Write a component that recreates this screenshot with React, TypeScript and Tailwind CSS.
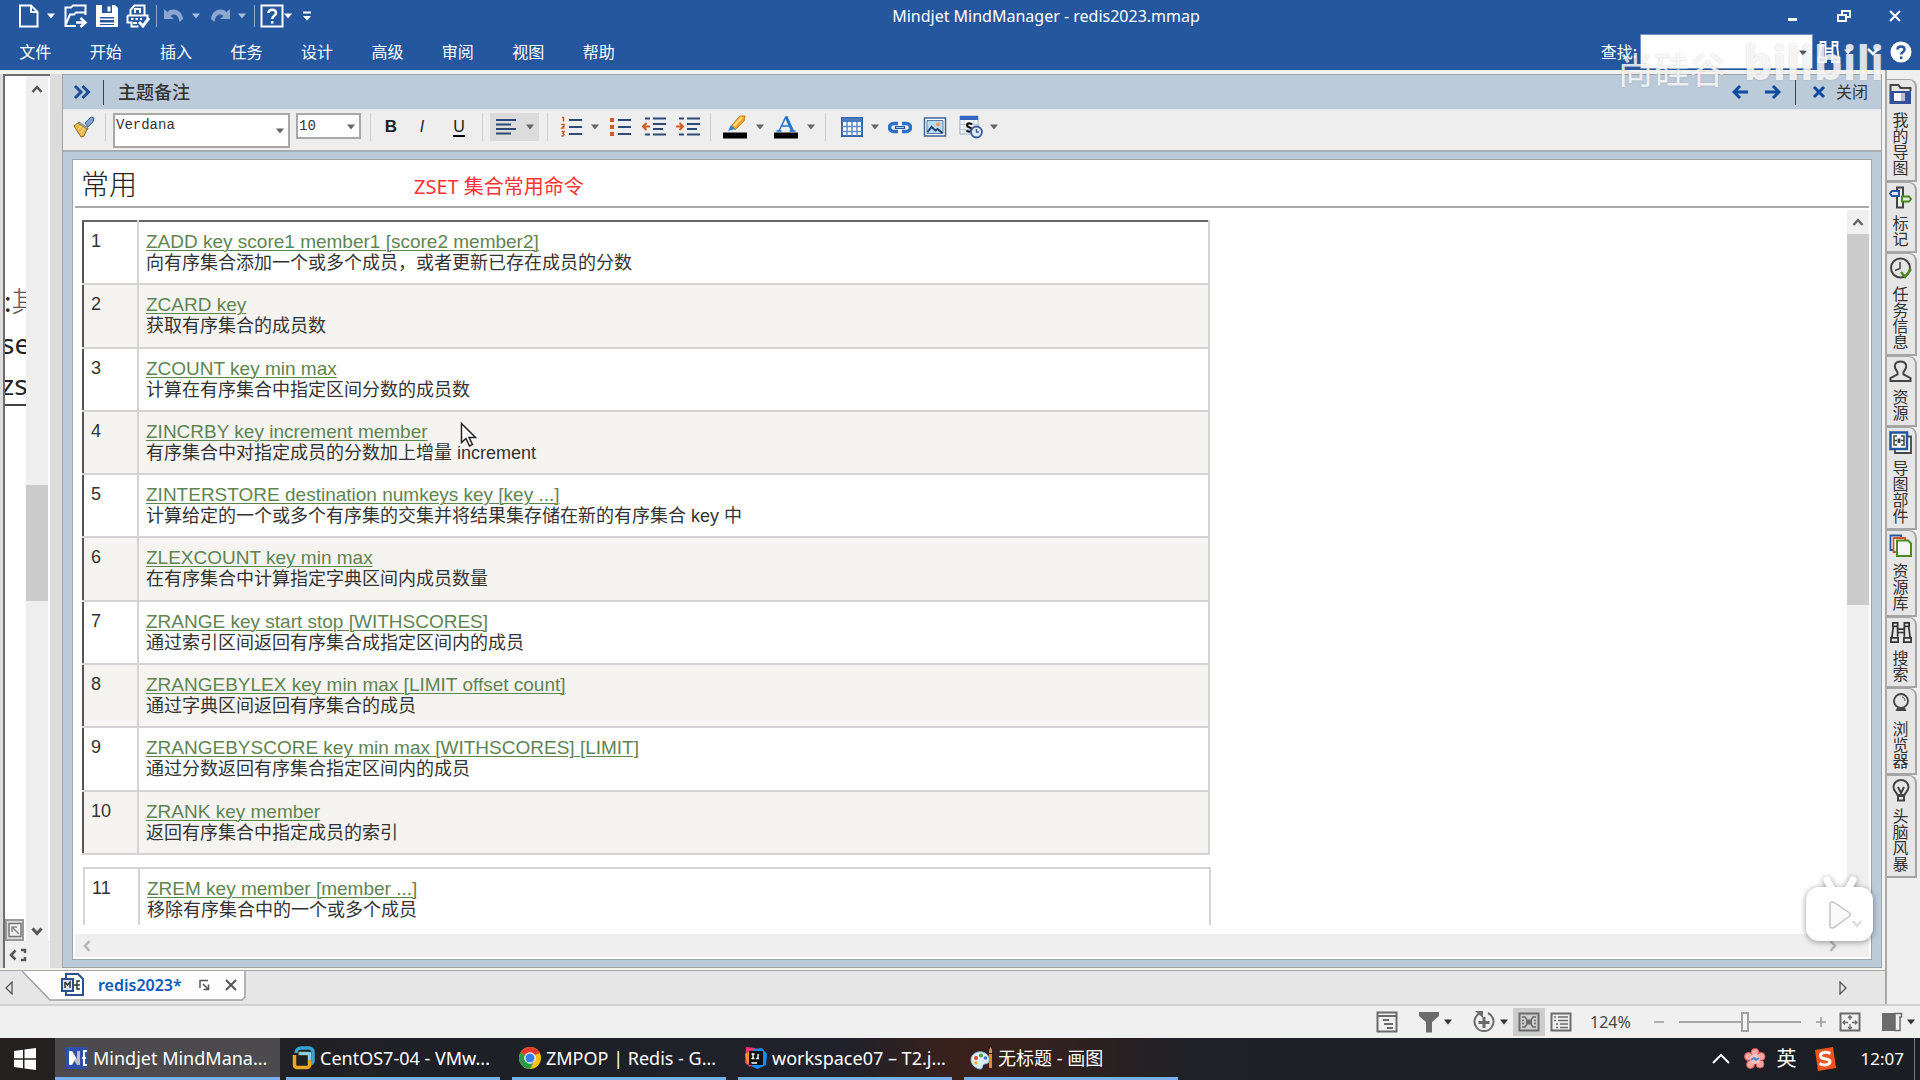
import type { ReactNode } from 'react';

const commands = [
  { id: 1, cmd: 'ZADD key score1 member1 [score2 member2]', desc: '向有序集合添加一个或多个成员，或者更新已存在成员的分数' },
  { id: 2, cmd: 'ZCARD key', desc: '获取有序集合的成员数' },
  { id: 3, cmd: 'ZCOUNT key min max', desc: '计算在有序集合中指定区间分数的成员数' },
  { id: 4, cmd: 'ZINCRBY key increment member', desc: '有序集合中对指定成员的分数加上增量 increment' },
  { id: 5, cmd: 'ZINTERSTORE destination numkeys key [key ...]', desc: '计算给定的一个或多个有序集的交集并将结果集存储在新的有序集合 key 中' },
  { id: 6, cmd: 'ZLEXCOUNT key min max', desc: '在有序集合中计算指定字典区间内成员数量' },
  { id: 7, cmd: 'ZRANGE key start stop [WITHSCORES]', desc: '通过索引区间返回有序集合成指定区间内的成员' },
  { id: 8, cmd: 'ZRANGEBYLEX key min max [LIMIT offset count]', desc: '通过字典区间返回有序集合的成员' },
  { id: 9, cmd: 'ZRANGEBYSCORE key min max [WITHSCORES] [LIMIT]', desc: '通过分数返回有序集合指定区间内的成员' },
  { id: 10, cmd: 'ZRANK key member', desc: '返回有序集合中指定成员的索引' },
];

const moreCommands = [{ id: 11, cmd: 'ZREM key member [member ...]', desc: '移除有序集合中的一个或多个成员' }];

const menus = ['文件', '开始', '插入', '任务', '设计', '高级', '审阅', '视图', '帮助'];

function Svg({ w = 24, h = 24, className = '', children }: { w?: number; h?: number; className?: string; children: ReactNode }) {
  return (
    <svg width={w} height={h} viewBox={`0 0 ${w} ${h}`} fill="none" className={`shrink-0 ${className}`} aria-hidden="true">
      {children}
    </svg>
  );
}

function Caret({ className = '' }: { className?: string }) {
  return (
    <Svg w={8} h={6} className={className}>
      <path d="M0 0.5h8L4 5.5z" fill="currentColor" />
    </Svg>
  );
}

function IconButton({ label, className = '', children }: { label: string; className?: string; children: ReactNode }) {
  return (
    <button type="button" aria-label={label} className={`flex shrink-0 items-center justify-center ${className}`}>
      {children}
    </button>
  );
}

/* ---------- Title bar and menu ---------- */

function QuickAccess() {
  return (
    <div className="flex w-[320px] items-center pl-[18px]">
      <IconButton label="新建">
        <Svg w={22} h={24}>
          <path d="M2 1.500h11l6.500 6.500v14.500H2z M13 1.500v6.500h6.500" stroke="#fff" strokeWidth="2" />
        </Svg>
      </IconButton>
      <IconButton label="新建选项" className="ml-[7px]"><Caret /></IconButton>
      <IconButton label="打开" className="ml-[9px]">
        <Svg>
          <path d="M12 22H1.500V3.500H7l2-2h12.500V11M1.500 21 6 10.500h4l2-2h9" stroke="#fff" strokeWidth="2" />
          <path d="M12 18.500h9m-4.500-4.500 5 4.500-5 4.500" stroke="#fff" strokeWidth="2.500" />
        </Svg>
      </IconButton>
      <IconButton label="保存" className="ml-[7px]">
        <Svg>
          <path d="M1 1h19l3 3v19H1z" fill="#fff" />
          <path d="M7 1h10v8H7zM5 13h14v8H5z" fill="#2456a0" />
          <path d="M12.500 2.500h3v5h-3zM5 14.500h14v1.500H5zM5 18.500h14v1.500H5z" fill="#fff" />
        </Svg>
      </IconButton>
      <IconButton label="打印" className="ml-[7px]">
        <Svg>
          <path d="M4.500 12V6l4-4.500h10V12M9 9V5h5v4" stroke="#fff" strokeWidth="2" />
          <path d="M1.500 11.500h20V17M1.500 11.500v7h4v4h7" stroke="#fff" strokeWidth="2" />
          <path d="M5 15h2.500M9.500 15H12M14 15h2M7 19h4" stroke="#fff" strokeWidth="2" />
          <path d="m13 18 4 4 6-8" stroke="#fff" strokeWidth="3" />
        </Svg>
      </IconButton>
      <span className="ml-1.5 h-[22px] w-px bg-[#8ba7d0]" />
      <IconButton label="撤销" className="ml-1.5 text-[#8ba7d0]">
        <Svg w={22} h={20}>
          <path d="M1 3v10h10l-3.500-3c3-3 8-2 9 6l3.500-3C19 4 10 1 4.500 6z" fill="currentColor" />
        </Svg>
      </IconButton>
      <IconButton label="撤销历史" className="ml-[7px] text-[#a9bddc]"><Caret /></IconButton>
      <IconButton label="恢复" className="ml-[9px] text-[#8ba7d0]">
        <Svg w={22} h={20}>
          <path d="M21 3v10H11l3.500-3c-3-3-8-2-9 6L2 13C3 4 12 1 17.500 6z" fill="currentColor" />
        </Svg>
      </IconButton>
      <IconButton label="恢复历史" className="ml-[7px] text-[#a9bddc]"><Caret /></IconButton>
      <span className="ml-2 h-[22px] w-px bg-[#8ba7d0]" />
      <IconButton label="帮助" className="ml-[5px]">
        <Svg>
          <path d="M1.500 1.500h21v21h-21z" stroke="#fff" strokeWidth="2" />
          <path d="M8.500 9c0-4.500 7.500-4.500 7.500 0 0 2.500-3.800 3-3.800 6M12.200 17v2.500" stroke="#fff" strokeWidth="2.500" />
        </Svg>
      </IconButton>
      <IconButton label="帮助选项"><Caret /></IconButton>
      <IconButton label="自定义" className="ml-2.5">
        <Svg w={10} h={12}>
          <path d="M1 2.500h8" stroke="#fff" strokeWidth="2" />
          <path d="M1 6h8l-4 4.500z" fill="#fff" />
        </Svg>
      </IconButton>
    </div>
  );
}

function Binoculars({ className = '' }: { className?: string }) {
  return (
    <Svg className={className}>
      <path
        d="M3.500 2h5v3.500h-5zM15.500 2h5v3.500h-5zM4 5.500 2.500 17M20 5.500 21.500 17M8.500 5.500v11M15.500 5.500v11M8.500 8.500h7M8.500 12h7M1.500 17.500h7.500V22H1.500zM15 17.500h7.500V22H15z"
        stroke="currentColor"
        strokeWidth="1.800"
      />
    </Svg>
  );
}

function Header() {
  return (
    <header className="flex h-[70px] shrink-0 flex-col bg-[#25579e] text-white">
      <div className="flex h-8 items-center">
        <QuickAccess />
        <h1 className="flex-1 pl-[172px] text-center text-[16px] leading-8">Mindjet MindManager - redis2023.mmap</h1>
        <div className="flex w-[320px] items-center justify-end gap-[33px] pr-4">
          <IconButton label="最小化"><Svg w={18} h={18}><path d="M4 12.500h9" stroke="#fff" strokeWidth="3" /></Svg></IconButton>
          <IconButton label="还原">
            <Svg w={18} h={18}><path d="M3 8h8v6H3zM7 8V4h8v6h-4" stroke="#fff" strokeWidth="2" /></Svg>
          </IconButton>
          <IconButton label="关闭窗口"><Svg w={18} h={18}><path d="m4 4 10 10M14 4 4 14" stroke="#fff" strokeWidth="2" /></Svg></IconButton>
        </div>
      </div>
      <div className="flex flex-1 items-center pt-px">
        <nav className="flex w-[634px]">
          {menus.map((m) => (
            <button key={m} type="button" className="flex-1 text-[16px] leading-6">{m}</button>
          ))}
        </nav>
        <div className="flex flex-1 items-center justify-end pr-2">
          <label htmlFor="find" className="mr-[3px] text-[16px] leading-6">查找:</label>
          <div className="relative">
            <input id="find" type="text" className="block h-[35px] w-[173px] border border-[#6f8fc0] bg-white px-1 text-[15px] text-black" />
            <Caret className="absolute right-[6px] top-[16px] text-[#555]" />
          </div>
          <IconButton label="搜索" className="ml-1"><Binoculars /></IconButton>
          <IconButton label="搜索选项" className="ml-[3px]"><Caret /></IconButton>
          <IconButton label="折叠功能区" className="ml-[14px]">
            <Svg w={14} h={10}><path d="m2 2 5 5 5-5" stroke="#fff" strokeWidth="2.500" /></Svg>
          </IconButton>
          <IconButton label="帮助中心" className="ml-2.5">
            <Svg w={22} h={22}>
              <circle cx="11" cy="11" r="10.500" fill="#fff" />
              <path d="M7.500 8.500c0-4 7-4 7 0 0 2.500-3.300 2.500-3.300 5M11.200 15.500V18" stroke="#25579e" strokeWidth="2.500" />
            </Svg>
          </IconButton>
        </div>
      </div>
    </header>
  );
}

/* ---------- Map window on the left ---------- */

function MapPane() {
  return (
    <section className="flex w-[62px] shrink-0 bg-[#dcdcdc] pl-[3px]">
      <div className="flex w-[47px] flex-col border-l-2 border-t-2 border-[#6d6d6d] bg-white">
        <div className="flex min-h-0 flex-1">
          <div className="relative w-[21px] overflow-hidden font-['Noto_Sans','Noto_Sans_CJK_SC',sans-serif] text-[28px] leading-10 text-[#222]">
            <span className="absolute -left-px top-[205px] flex whitespace-nowrap">:<span className="font-light text-[#555]">其</span></span>
            <span className="absolute -left-1 top-[247px]">se</span>
            <span className="absolute -left-1 top-[288px] w-12 border-b-2 border-[#444]">zs</span>
            <Svg w={20} h={22} className="absolute bottom-0 left-0">
              <path d="M1 1h17v20H1z" fill="#ddd" stroke="#999" strokeWidth="2" />
              <path d="M4 4.500h12v13H4z" fill="#f2f2f2" stroke="#777" strokeWidth="1.500" />
              <path d="M7 13V8h5M7 8l7 7" stroke="#888" strokeWidth="1.500" />
            </Svg>
          </div>
          <div className="flex w-[22px] flex-col items-center bg-[#efefef]">
            <Svg w={14} h={14} className="mt-[6px] text-[#555]"><path d="m2.500 10 4.500-5 4.500 5" stroke="currentColor" strokeWidth="2.500" /></Svg>
            <div className="mt-[389px] h-[116px] w-full bg-[#cbcbcb]" />
            <Svg w={14} h={14} className="mb-[3px] mt-auto text-[#555]"><path d="m2.500 4.500 4.500 5 4.500-5" stroke="currentColor" strokeWidth="3" /></Svg>
          </div>
        </div>
        <div className="flex h-[27px] items-center bg-[#efefef] pl-1 text-[#555]">
          <Svg w={18} h={14}><path d="M6.500 2.500 2 7l4.500 4.500M12 2h4v3M12 12h4V9" stroke="currentColor" strokeWidth="2.500" /></Svg>
        </div>
      </div>
    </section>
  );
}

/* ---------- Notes panel ---------- */

function Sep({ className = '' }: { className?: string }) {
  return <span className={`h-7 w-px shrink-0 bg-[#cfcfcf] ${className}`} />;
}

function Bars({ rows, color = '#2c4a75' }: { rows: string; color?: string }) {
  return <path d={rows} stroke={color} strokeWidth="2.200" />;
}

function Toolbar() {
  return (
    <div className="flex h-[42px] shrink-0 items-start border-b-2 border-[#a9adb1] bg-[#eee] pl-2.5 pt-[3px] text-[#666]">
      <IconButton label="格式刷" className="h-7">
        <Svg w={22} h={24}>
          <path d="m12 8 6-6 3 1-1 4-5 5z" fill="#7fa3cf" stroke="#3f5f8f" />
          <path d="m6 7 9 6-1 2-9-6z" fill="#dfe8f3" stroke="#5b6f8a" />
          <path d="M1 11 5 8l9 6-3 7-3 1z" fill="#e9b949" stroke="#8a6a25" />
          <path d="m5 14 4-3M8 18l3-5" stroke="#fbe3a0" />
        </Svg>
      </IconButton>
      <Sep className="ml-2.5" />
      <div className="relative ml-[7px]">
        <select aria-label="字体" className="block h-[35px] w-[177px] appearance-none border-2 border-[#a8a8a8] bg-white pb-3 pl-px font-['Liberation_Mono',monospace] text-[14px] leading-4 text-[#333]">
          <option>Verdana</option>
        </select>
        <Caret className="pointer-events-none absolute right-[6px] top-[15px]" />
      </div>
      <div className="relative ml-1.5">
        <select aria-label="字号" className="block h-[26px] w-[65px] appearance-none border-2 border-[#a8a8a8] bg-white pl-px font-['Liberation_Mono',monospace] text-[14px] leading-4 text-[#333]">
          <option>10</option>
        </select>
        <Caret className="pointer-events-none absolute right-[6px] top-[11px]" />
      </div>
      <Sep className="ml-[9px]" />
      <IconButton label="加粗" className="ml-2.5 h-7 w-5 font-['Liberation_Sans',sans-serif] text-[17px] font-bold text-[#222]">B</IconButton>
      <IconButton label="斜体" className="ml-[11px] h-7 w-5 font-['Liberation_Sans',sans-serif] text-[16px] italic text-[#222]">I</IconButton>
      <IconButton label="下划线" className="ml-[17px] h-7 w-5 font-['Liberation_Sans',sans-serif] text-[16px] text-[#222]">
        <span className="border-b-2 border-black leading-[17px]">U</span>
      </IconButton>
      <Sep className="ml-[13px]" />
      <IconButton label="对齐" className="ml-[7px] h-7 w-[49px] gap-[9px] bg-[#dcdcdc]">
        <Svg w={22} h={20}><Bars rows="M1 3h20M1 7.500h15M1 12h20M1 16.500h15" /></Svg>
        <Caret />
      </IconButton>
      <Sep className="ml-2" />
      <IconButton label="编号列表" className="ml-3 h-7 gap-[9px]">
        <Svg w={22} h={22}>
          <Bars rows="M9 4h13M9 11h13M9 18h13" />
          <path d="M2 1.500h1.500v4M1.500 8.500H4V10l-2 2h2.500M1.500 15.500H4l-1 2 1 1-1 1.500H1.500" stroke="#cf5a25" strokeWidth="1.500" />
        </Svg>
        <Caret />
      </IconButton>
      <IconButton label="项目符号" className="ml-2.5 h-7">
        <Svg w={22} h={22}>
          <Bars rows="M9 4h13M9 11h13M9 18h13" />
          <path d="M1 2h4v4H1zM1 9h4v4H1zM1 16h4v4H1z" fill="#cf5a25" />
        </Svg>
      </IconButton>
      <IconButton label="减少缩进" className="ml-[11px] h-7">
        <Svg h={22}>
          <Bars rows="M3 2.500h5M11 2.500h13M11 8h13M11 13h10M3 18.500h5M11 18.500h13" />
          <path d="M8 10.500H2M4.500 7 1 10.500 4.500 14" stroke="#cf5a25" strokeWidth="2" />
        </Svg>
      </IconButton>
      <IconButton label="增加缩进" className="ml-2.5 h-7">
        <Svg h={22}>
          <Bars rows="M3 2.500h5M11 2.500h13M11 8h13M11 13h10M3 18.500h5M11 18.500h13" />
          <path d="M0 10.500h6M3.500 7 7 10.500 3.500 14" stroke="#cf5a25" strokeWidth="2" />
        </Svg>
      </IconButton>
      <Sep className="ml-2.5" />
      <IconButton label="突出显示" className="ml-3 h-7 gap-[9px]">
        <Svg>
          <path d="m9 10 8-9h5l-1 5-9 9z" fill="#f5a72c" stroke="#c97b14" />
          <path d="m11 11 8-9" stroke="#ffe08a" strokeWidth="2" />
          <path d="m5 16 3-6 4 4z" fill="#2f7fd0" />
          <path d="M0 17.500h24v6H0z" fill="#000" />
        </Svg>
        <Caret />
      </IconButton>
      <IconButton label="字体颜色" className="ml-2.5 h-7 gap-[9px]">
        <Svg>
          <path d="M5 16 12 1.500M8 11h8M2.500 16h5M15.500 16h6" stroke="#1d72cf" strokeWidth="1.500" />
          <path d="M12 1.500 18.500 16" stroke="#1d72cf" strokeWidth="3" />
          <path d="M0 17.500h24v6H0z" fill="#000" />
        </Svg>
        <Caret />
      </IconButton>
      <Sep className="ml-2.5" />
      <IconButton label="插入表格" className="ml-[15px] h-7 gap-2">
        <Svg w={22} h={20}>
          <path d="M1 1h20v18H1z" fill="#fff" stroke="#3766a8" strokeWidth="2" />
          <path d="M1 1h20v4H1z" fill="#4a7cc2" />
          <path d="M6 5v14M11 5v14M16 5v14M1 9.500h20M1 14.500h20" stroke="#5f8bc9" strokeWidth="1.500" />
        </Svg>
        <Caret />
      </IconButton>
      <IconButton label="插入链接" className="ml-[9px] h-7">
        <Svg h={16}>
          <path d="M10 4.500H5.500a3.500 3.500 0 0 0 0 8H10M14 4.500h4.500a3.500 3.500 0 0 1 0 8H14" stroke="#2c6fc4" strokeWidth="3.500" />
          <path d="M7 8.500h10" stroke="#2456a0" strokeWidth="3" />
          <path d="M8 8.500h8" stroke="#a8d0f5" />
        </Svg>
      </IconButton>
      <IconButton label="插入图片" className="ml-[11px] h-7">
        <Svg h={20}>
          <path d="M1.500 1h21v18h-21z" fill="#fff" stroke="#3f6390" strokeWidth="1.500" />
          <path d="M4 3.500h16v13H4z" fill="#b9dcf5" stroke="#5b7ba3" />
          <path d="m4.500 15 4-5 4 3.500 2-1.500 5 4" stroke="#1f3f6e" strokeWidth="2" />
          <circle cx="15" cy="7.500" r="2" fill="#ef9a5a" />
        </Svg>
      </IconButton>
      <IconButton label="日期时间" className="ml-3 h-7 gap-[7px]">
        <Svg>
          <path d="M1 1h18v18H1z" fill="#fff" stroke="#8fa7c9" />
          <path d="M1 1h18v4H1z" fill="#3766c0" />
          <path d="M5 5v14M15 5v14M1 9.500h18M1 14.500h18" stroke="#b9c8de" />
          <path d="M13 9.500c-1.500-2-5.500-1.500-5 1s5 1.500 5 4-4 2.500-5.500 1" stroke="#111" strokeWidth="2.200" />
          <circle cx="17.500" cy="17" r="5.500" fill="#dfeafa" stroke="#3c5f95" strokeWidth="1.800" />
          <path d="M17.500 14v3h2.500" stroke="#3c5f95" strokeWidth="1.500" />
        </Svg>
        <Caret />
      </IconButton>
    </div>
  );
}

function PanelHeader() {
  return (
    <div className="flex h-[35px] shrink-0 items-center border-b border-[#dfe5eb] bg-[#bccbda] text-[#333]">
      <IconButton label="折叠面板" className="ml-2.5">
        <Svg w={18} h={16}><path d="m2 2 6 6-6 6M9.500 2l6 6-6 6" stroke="#1b4f96" strokeWidth="3" /></Svg>
      </IconButton>
      <span className="ml-3 h-[25px] w-px bg-[#444]" />
      <h2 className="ml-[14px] flex-1 text-[18px] font-medium leading-6">主题备注</h2>
      <IconButton label="上一个"><Svg w={16} h={16}><path d="M16 8H2.500M8 2 2 8l6 6" stroke="#0d4aa0" strokeWidth="3" /></Svg></IconButton>
      <IconButton label="下一个" className="ml-[17px]"><Svg w={16} h={16}><path d="M0 8h13.500M8 2l6 6-6 6" stroke="#0d4aa0" strokeWidth="3" /></Svg></IconButton>
      <span className="ml-3.5 h-[25px] w-px bg-[#444]" />
      <button type="button" className="ml-4 mr-[13px] flex items-center gap-2.5 text-[16px] leading-6">
        <Svg w={14} h={14}><path d="m2 2 10 10M12 2 2 12" stroke="#0d4aa0" strokeWidth="3" /></Svg>
        关闭
      </button>
    </div>
  );
}

function CommandRow({ id, cmd, desc }: { id: number; cmd: string; desc: string }) {
  return (
    <tr className="border-b-2 border-[#d4d4d4] align-top even:bg-[#f5f4f1]">
      <td className="w-[55px] border-r-2 border-[#d4d4d4] pl-[7px] pt-[9px]">{id}</td>
      <td className="h-[63px] pl-[7px] pt-[9px]">
        <a href="#" className="text-[19px] text-[#5f8452] underline decoration-1 underline-offset-2">{cmd}</a>
        <p>{desc}</p>
      </td>
    </tr>
  );
}

function NotesDocument() {
  return (
    <div className="flex min-h-0 flex-1 flex-col border border-[#9ea3a8] bg-white p-0.5">
      <div className="flex h-[46px] shrink-0 items-center border-b-2 border-[#a9a9a9] pl-[6px]">
        <h3 className="w-[333px] text-[28px] font-light leading-10 text-[#222]">常用</h3>
        <span className="pt-[5px] text-[20px] leading-10 text-[#f33]">ZSET 集合常用命令</span>
      </div>
      <div className="flex min-h-0 flex-1 pt-0.5">
        <div className="min-w-0 flex-1 overflow-hidden pb-[9px] pl-[7px] pt-2.5 font-['Liberation_Sans','Noto_Sans_CJK_SC',sans-serif] text-[18px] leading-[21px] text-[#333]">
          <div className="h-full overflow-hidden">
            <table className="h-[635px] w-[1128px] border-collapse border-l-2 border-r-2 border-t-2 border-l-[#555] border-r-[#d4d4d4] border-t-[#666]">
              <tbody>{commands.map((c) => <CommandRow key={c.id} {...c} />)}</tbody>
            </table>
            <table className="ml-px mt-3 w-[1128px] border-collapse border-2 border-[#d4d4d4]">
              <tbody>{moreCommands.map((c) => <CommandRow key={c.id} {...c} />)}</tbody>
            </table>
          </div>
        </div>
        <div className="flex w-[22px] shrink-0 flex-col items-center bg-[#f0f0f0]">
          <Svg w={14} h={14} className="my-[5px] text-[#666]"><path d="m2.500 10 4.500-5 4.500 5" stroke="currentColor" strokeWidth="2.500" /></Svg>
          <div className="h-[371px] w-full bg-[#cbcbcb]" />
        </div>
      </div>
      <div className="flex h-[23px] shrink-0 items-center justify-between bg-[#efefef] pl-[6px] pr-[30px] text-[#b5b5b5]">
        <Svg w={12} h={14}><path d="M8.500 2 4 7l4.500 5" stroke="currentColor" strokeWidth="2.500" /></Svg>
        <Svg w={12} h={14}><path d="m3.500 2 4.500 5-4.500 5" stroke="currentColor" strokeWidth="2.500" /></Svg>
      </div>
    </div>
  );
}

function DocTabs() {
  return (
    <div className="flex h-[34px] shrink-0 items-start border-t border-[#a9a9a9] bg-[#e6e6e6] text-[#555]">
      <IconButton label="向左滚动" className="ml-[4px] h-[34px]">
        <Svg w={10} h={14}><path d="M8 1v12L2 7z" stroke="currentColor" strokeWidth="1.300" /></Svg>
      </IconButton>
      <div className="relative ml-2 flex h-[30px] w-[224px] items-center">
        <Svg w={224} h={30} className="absolute inset-0">
          <path d="M0 0l28 29h192l3-3V0" fill="#fdfdfd" stroke="#a0a0a0" strokeWidth="1.500" />
        </Svg>
        <div className="relative flex flex-1 items-center pb-0.5 pl-[39px]">
          <Svg>
            <path d="M5 1h12l5 5v16H5z" fill="#fff" stroke="#2b4f93" strokeWidth="2" />
            <path d="M1 6h11v12H1z" fill="#dfe6f2" stroke="#2b4f93" strokeWidth="2" />
            <path d="M4 9v6M4 9l2.500 3L9 9v6M13 12h3M19 8h-3v8h3M16 12h3" stroke="#333" strokeWidth="1.500" />
          </Svg>
          <button type="button" className="ml-[13px] text-[16px] font-semibold leading-6 text-[#0a5cb8]">redis2023*</button>
          <IconButton label="停靠" className="ml-auto">
            <Svg w={12} h={12}><path d="M2 9V1.500h8M5 5l5 5M10.500 5.500v5h-5" stroke="currentColor" strokeWidth="1.500" /></Svg>
          </IconButton>
          <IconButton label="关闭标签" className="ml-[14px] mr-2">
            <Svg w={14} h={14}><path d="m2 2 10 10M12 2 2 12" stroke="currentColor" strokeWidth="2" /></Svg>
          </IconButton>
        </div>
      </div>
      <IconButton label="向右滚动" className="ml-auto mr-[37px] h-[34px]">
        <Svg w={10} h={14}><path d="M2 1v12l6-6z" stroke="currentColor" strokeWidth="1.300" /></Svg>
      </IconButton>
    </div>
  );
}

/* ---------- Task pane tabs on the right ---------- */

const paneTabs = [
  {
    label: '我的导图',
    icon: (
      <>
        <path d="M1.500 21V2h8l2 3h10v3" stroke="#444" strokeWidth="2" />
        <path d="M1 8h21v13H1z" fill="#33509c" />
        <path d="M5 10h7v8H5z" fill="#fff" />
        <path d="M12 10h4v8h-4z" fill="#b9bfd0" />
      </>
    ),
  },
  {
    label: '标记',
    icon: (
      <>
        <path d="M8 1.500h6v20H8z" fill="#eee" stroke="#444" strokeWidth="2" />
        <path d="M1 7.500l2-2.500h7v5H3z" fill="#e8e8e8" stroke="#2456a0" strokeWidth="2" />
        <path d="M22 13l-2-2.500h-7v5h7z" fill="#e8e8e8" stroke="#4b8a1f" strokeWidth="2" />
      </>
    ),
  },
  {
    label: '任务信息',
    icon: (
      <>
        <circle cx="11.500" cy="11" r="9.500" stroke="#444" strokeWidth="2" />
        <path d="M11 5v6.500l-5 2" stroke="#444" strokeWidth="1.500" />
        <path d="m12 15 4 5 6-8" stroke="#4b8a1f" strokeWidth="2.500" />
      </>
    ),
  },
  {
    label: '资源',
    icon: <path d="M8.500 12C3 5 7 1.500 11.500 1.500S20 5 14.500 12v2.500l7 3.500v3H1.500v-3l7-3.500z" stroke="#444" strokeWidth="2" />,
  },
  {
    label: '导图部件',
    icon: (
      <>
        <path d="M6 5.500h16V22H6z" fill="#fff" stroke="#444" strokeWidth="1.800" />
        <path d="M1.500 1.500h16.500v16.500H1.500z" fill="#fff" stroke="#2456a0" strokeWidth="2.500" />
        <path d="M8 5H5v9h3M5 9.500h3M12 5h3v9h-3M15 9.500h-3" stroke="#444" strokeWidth="1.500" />
        <path d="M8.500 7.500h3v4.500h-3z" fill="#444" />
      </>
    ),
  },
  {
    label: '资源库',
    icon: (
      <>
        <path d="M1.500 1.500H12V16H1.500z" fill="#fff" stroke="#2456a0" strokeWidth="1.800" />
        <path d="M4.500 4H16v14H4.500z" fill="#fff" stroke="#d9502a" strokeWidth="1.800" />
        <path d="M8 6.500h11l3 3V22H8z" fill="#f4f4f4" stroke="#4b8a1f" strokeWidth="2" />
      </>
    ),
  },
  { label: '搜索', icon: null },
  {
    label: '浏览器',
    icon: (
      <>
        <circle cx="12" cy="9" r="7" stroke="#444" strokeWidth="1.800" />
        <path d="M13 5c2 .5 3 2 3 4" stroke="#444" />
        <path d="M8 16h8l1.500 3h-11z" fill="#444" />
      </>
    ),
  },
  {
    label: '头脑风暴',
    icon: (
      <>
        <path d="M8.500 16C7 12.500 4.500 12 4.500 8a7.500 7 0 0 1 15 0c0 4-2.500 4.500-4 8z" stroke="#444" strokeWidth="2" />
        <path d="M9 8l3 6 3-6M9 17h6v4.500H9z" stroke="#444" strokeWidth="2" />
      </>
    ),
  },
];

function PaneTabs() {
  return (
    <aside className="flex w-[35px] shrink-0 flex-col border-l-2 border-[#a9a9a9] bg-[#efefef] pt-[9px]">
      {paneTabs.map((tab) => (
        <button
          key={tab.label}
          type="button"
          className="flex w-[30px] flex-col items-center gap-1.5 rounded-tr-lg border-b-2 border-r-2 border-t border-[#a5a5a5] bg-[#e6e6e6] pb-1 pr-px pt-[3px] text-[#333]"
        >
          {tab.icon ? <Svg h={23}>{tab.icon}</Svg> : <Binoculars className="h-[23px]" />}
          <span className="mr-0.5 text-[16px] leading-4 [text-orientation:upright] [writing-mode:vertical-rl]">{tab.label}</span>
        </button>
      ))}
    </aside>
  );
}

/* ---------- Status bar ---------- */

function StatusBar() {
  return (
    <footer className="flex h-[34px] shrink-0 items-center justify-end border-t-2 border-[#d0d0d0] bg-[#f0f0f0] pr-[5px] text-[#6b6b6b]">
      <IconButton label="导图索引">
        <Svg w={22} h={22}>
          <path d="M1.500 1.500h19v19h-19z" stroke="currentColor" strokeWidth="2" />
          <path d="M1 5h20M7 9h6M8 13h9M11 17h6" stroke="currentColor" strokeWidth="1.800" />
        </Svg>
      </IconButton>
      <IconButton label="筛选" className="ml-5 gap-1">
        <Svg w={22} h={22}><path d="M1 1h20v4l-7 6v10.500H8V11L1 5z" fill="currentColor" /></Svg>
        <Caret className="text-[#333]" />
      </IconButton>
      <IconButton label="显示层级" className="ml-5 gap-1">
        <Svg>
          <path d="M8 3a9.500 9.500 0 1 0 8 0" stroke="currentColor" strokeWidth="2" />
          <path d="M3 1h8v7z" fill="currentColor" />
          <path d="M12 7v11M6.500 12.500h11" stroke="currentColor" strokeWidth="3" />
        </Svg>
        <Caret className="text-[#333]" />
      </IconButton>
      <IconButton label="导图视图" className="ml-[5px] h-7 w-8 bg-[#cdcdcd]">
        <Svg w={22} h={20}>
          <path d="M1.500 1.500h19v17h-19z" stroke="currentColor" strokeWidth="2" />
          <path d="M4 5h3l2 3M18 5h-3l-2 3M4 15h3l2-3M18 15h-3l-2-3M4 8.500h2M4 11.500h2M16 8.500h2M16 11.500h2" stroke="currentColor" strokeWidth="1.500" />
          <path d="M8 7.500h6v5H8z" fill="currentColor" />
        </Svg>
      </IconButton>
      <IconButton label="大纲视图" className="ml-[5px]">
        <Svg w={22} h={20}>
          <path d="M1.500 1.500h19v17h-19z" stroke="currentColor" strokeWidth="2" />
          <path d="M4 5h2M8 5h10M4 8.500h2M8 8.500h10M6 12h2M10 12h8M6 15.500h2M10 15.500h8" stroke="currentColor" strokeWidth="1.500" />
        </Svg>
      </IconButton>
      <span className="ml-[18px] w-[63px] text-[16px] leading-6 text-[#444]">124%</span>
      <IconButton label="缩小"><Svg w={12} h={12}><path d="M1 6h10" stroke="#999" strokeWidth="1.500" /></Svg></IconButton>
      <input
        type="range"
        aria-label="缩放"
        min={0}
        max={100}
        defaultValue={54}
        className="ml-[14px] h-5 w-[122px] appearance-none bg-transparent [&::-webkit-slider-runnable-track]:h-[2px] [&::-webkit-slider-runnable-track]:bg-[#a5a5a5] [&::-webkit-slider-thumb]:-mt-[9px] [&::-webkit-slider-thumb]:h-5 [&::-webkit-slider-thumb]:w-2 [&::-webkit-slider-thumb]:appearance-none [&::-webkit-slider-thumb]:border-2 [&::-webkit-slider-thumb]:border-[#a0a0a0] [&::-webkit-slider-thumb]:bg-[#f4f4f4]"
      />
      <IconButton label="放大" className="ml-[14px]"><Svg w={12} h={12}><path d="M1 6h10M6 1v10" stroke="#999" strokeWidth="1.500" /></Svg></IconButton>
      <IconButton label="适合窗口" className="ml-3">
        <Svg w={22} h={20}>
          <path d="M1.500 1.500h19v17h-19z" stroke="currentColor" strokeWidth="2" />
          <path d="M11 4v4M11 12v5M4.500 10.500H9M13 10.500h4.500M9 6l2-2 2 2M9 15l2 2 2-2M6 8.500l-2 2 2 2M16 8.500l2 2-2 2" stroke="currentColor" strokeWidth="1.300" />
        </Svg>
      </IconButton>
      <IconButton label="任务窗格" className="ml-5 gap-1">
        <Svg w={22} h={20}>
          <path d="M1 1h13v18H1z" fill="currentColor" />
          <path d="M14 1.500h6.500V5H19v13.500h-5z" stroke="currentColor" strokeWidth="1.500" />
        </Svg>
        <Caret className="text-[#333]" />
      </IconButton>
    </footer>
  );
}

/* ---------- Windows taskbar ---------- */

const windowsOpen = [
  {
    title: 'Mindjet MindMana...',
    icon: (
      <>
        <path d="M1 1h22v22H1z" fill="#2f4fa8" />
        <path d="M4 5h3l5 8V5h3v14h-3l-5-8v8H4z" fill="#b8bccb" />
        <path d="M4 5h3l4 7-4 7H4z" fill="#fff" />
        <path d="M22 5h-3v14h3M17 12h4" stroke="#fff" strokeWidth="2" />
      </>
    ),
  },
  {
    title: 'CentOS7-04 - VMw...',
    icon: (
      <>
        <path d="M4 7a5 5 0 0 1 5-5h8a4 4 0 0 1 4 4v9a3 3 0 0 1-3 3" stroke="#36a3d9" strokeWidth="3.500" />
        <path d="M6.500 7.500H16a1.500 1.500 0 0 1 1.500 1.500v10a2.500 2.500 0 0 1-2.500 2.500H5A2.500 2.500 0 0 1 2.500 19V9" stroke="#f0a51e" strokeWidth="3.500" />
        <path d="M8 7.500h9.500V14" stroke="#7fd0e8" strokeWidth="3" />
      </>
    ),
  },
  {
    title: 'ZMPOP | Redis - G...',
    icon: (
      <>
        <circle cx="12" cy="12" r="11" fill="#fbc116" />
        <path d="M12 12 2.500 6.500A11 11 0 0 1 21.500 6.500z" fill="#e33b2e" />
        <path d="M2.500 6.500A11 11 0 0 0 12 23l4.500-8.500L12 12z" fill="#2a9a48" />
        <path d="M12 6.500h9.500" stroke="#e33b2e" strokeWidth="2" />
        <circle cx="12" cy="12" r="5.800" fill="#fff" />
        <circle cx="12" cy="12" r="4.500" fill="#3b7ded" />
      </>
    ),
  },
  {
    title: 'workspace07 – T2.j...',
    icon: (
      <>
        <path d="M2 1l9 1 3 10-8 9-5-4z" fill="#f5316b" />
        <path d="M1 8l5-3 1 12-4 1z" fill="#f98b2b" />
        <path d="M10 3l8-1 5 6-1 11-9 4-6-3z" fill="#1c8bf0" />
        <path d="M5 5h14v14H5z" fill="#111" />
        <path d="M7.500 8h3M9 8v4.500M7.500 12.500h3M14 8v4.500h-2M7.500 17H13" stroke="#fff" strokeWidth="1.400" />
      </>
    ),
  },
  {
    title: '无标题 - 画图',
    icon: (
      <>
        <path d="M1 14C1 8 7 5 12 6s8 5 7 9-5 2-6 4 0 4-3 4-9-4-9-9z" fill="#dceefa" stroke="#8bb9da" />
        <circle cx="6" cy="12" r="2" fill="#e2452f" />
        <circle cx="11" cy="9.500" r="2" fill="#4ba53c" />
        <circle cx="15.500" cy="12" r="1.800" fill="#3c73d0" />
        <circle cx="6" cy="17" r="1.800" fill="#f0b41f" />
        <path d="M20.500 8v14" stroke="#e08a2a" strokeWidth="3" />
        <path d="M19 7c0-3 1-5 1.500-6 .8 1 2 3 1.500 6z" fill="#c89b6a" />
      </>
    ),
  },
];

function Taskbar() {
  return (
    <div className="flex h-[42px] shrink-0 bg-[linear-gradient(90deg,#24201f_0%,#1e2028_28%,#20212a_44%,#3a211b_50%,#33211d_54%,#1f2127_62%,#1b1d25_100%)] text-[18px] text-white">
      <IconButton label="开始" className="w-[55px] pr-1.5">
        <Svg><path d="M1 4l9-1.300V11.300H1zM11.500 2.500 23 1v10.300H11.500zM1 12.800h9v8.500L1 20zM11.500 12.800H23V23l-11.500-1.600z" fill="#fff" /></Svg>
      </IconButton>
      {windowsOpen.map((w, i) => (
        <button
          key={w.title}
          type="button"
          className={`flex items-center border-b-[3px] border-[#76b0ee] text-left ${i === 0 ? 'w-[225px] bg-[#4c4a4c] pl-2.5' : i === 1 ? 'ml-1.5 w-[214px] pl-1.5' : 'ml-3 w-[214px] pl-1.5'}`}
        >
          <Svg>{w.icon}</Svg>
          <span className="ml-1 whitespace-nowrap leading-6">{w.title}</span>
        </button>
      ))}
      <div className="ml-auto mr-[5px] flex items-center border-r border-[#777] pr-2.5">
        <IconButton label="显示隐藏的图标">
          <Svg w={20} h={14}><path d="m2 11 8-8 8 8" stroke="#fff" strokeWidth="2" /></Svg>
        </IconButton>
        <Svg className="ml-[12px]">
          <g fill="#f2a9a6" stroke="#d9534f">
            <circle cx="12" cy="5.500" r="4" /><circle cx="18" cy="9.500" r="4" /><circle cx="17" cy="17" r="4" />
            <circle cx="7.500" cy="17.500" r="4" /><circle cx="5.500" cy="9.500" r="4" />
          </g>
          <circle cx="12" cy="12" r="5" fill="#f6c5c3" />
          <path d="M8 13l3-2 2 2 3-2" stroke="#4d7fc4" strokeWidth="1.800" />
        </Svg>
        <button type="button" className="ml-2.5 text-[20px] leading-6">英</button>
        <Svg className="ml-4">
          <path d="M2 3 20 0l3 21-18 3z" fill="#f0521d" />
          <path d="M17.500 6.500C12 4 6.500 6 7.500 9.500s9.500 1.500 9.500 5-6 4.500-10.500 2" stroke="#fff" strokeWidth="3" />
        </Svg>
        <time className="ml-6 text-[17px] leading-6">12:07</time>
      </div>
    </div>
  );
}

/* ---------- Things lying over the window ---------- */

function Overlays() {
  return (
    <div className="pointer-events-none">
      <div className="absolute right-[36px] top-[32px] flex items-center text-white/80 [text-shadow:0_0_2px_rgba(120,120,120,0.400)]">
        <span className="mr-[18px] mt-[17px] text-[36px] leading-10">尚硅谷</span>
        <span className="text-[46px] font-bold leading-[60px]">bilibili</span>
      </div>
      <Svg w={18} h={26} className="absolute left-[460px] top-[422px]">
        <path d="M1.500 1.500v19l4.500-4 3.500 7.500 3-1.500-3.500-7h6.500z" fill="#fff" stroke="#222" strokeWidth="1.500" />
      </Svg>
      <Svg w={80} h={76} className="absolute bottom-[131px] right-[40px] drop-shadow-[0_1px_3px_rgba(0,0,0,0.400)]">
        <path d="m27 7 5 9M53 7l-5 9" stroke="#fff" strokeWidth="7" strokeLinecap="round" />
        <rect x="6" y="14" width="67" height="54" rx="13" fill="#fff" />
        <path d="M30 31c0-2 2-2.500 4-1.500l15 10c2 1.500 2 2.500 0 4l-15 11c-2 1-4 .5-4-1.500z" fill="#fafafa" stroke="#c4c4c4" strokeWidth="1.500" />
        <path d="m53 48 4 5 4-5" stroke="#ddd" strokeWidth="2.500" />
      </Svg>
    </div>
  );
}

export default function App() {
  return (
    <div className="relative flex h-screen flex-col overflow-hidden bg-[#efefef] font-['Noto_Sans','Noto_Sans_CJK_SC',sans-serif]">
      <Header />
      <div className="flex min-h-0 flex-1">
        <div className="flex min-w-0 flex-1 flex-col">
          <main className="flex min-h-0 flex-1 bg-[#f5f3f0] pb-[2px] pr-[3px] pt-1">
            <MapPane />
            <section className="flex min-w-0 flex-1 flex-col border border-[#9ea3a8] bg-[#bccbda]">
              <PanelHeader />
              <Toolbar />
              <div className="flex min-h-0 flex-1 p-[7px] pl-[9px] pr-[9px]">
                <NotesDocument />
              </div>
            </section>
          </main>
          <DocTabs />
        </div>
        <PaneTabs />
      </div>
      <StatusBar />
      <Taskbar />
      <Overlays />
    </div>
  );
}
